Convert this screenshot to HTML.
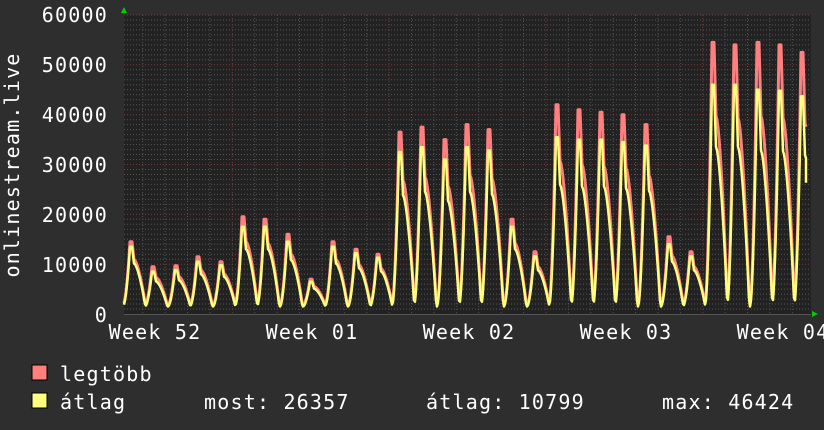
<!DOCTYPE html>
<html><head><meta charset="utf-8"><style>
html,body{margin:0;padding:0;background:#2e2e2e;}
body{width:824px;height:430px;overflow:hidden;position:relative;font-family:"DejaVu Sans Mono","Liberation Mono",monospace;color:#fff;}
svg{position:absolute;left:0;top:0;}
text{letter-spacing:1.2px;}
</style></head><body>
<svg id="g" width="824" height="430" xmlns="http://www.w3.org/2000/svg" font-family="DejaVu Sans Mono, Liberation Mono, monospace" fill="#fff">
<rect x="124" y="15" width="687" height="300" fill="#222"/>
<g id="grid"></g>
<g id="data"></g>
<polygon points="121,13 127,13 124,7" fill="#0c0"/>
<polygon points="812,311 812,317 818,314" fill="#0c0"/>
<g font-size="20" text-anchor="end">
<text x="108" y="22">60000</text>
<text x="108" y="72">50000</text>
<text x="108" y="122">40000</text>
<text x="108" y="172">30000</text>
<text x="108" y="222">20000</text>
<text x="108" y="272">10000</text>
<text x="108" y="322">0</text>
</g>
<text transform="translate(19,165) rotate(-90)" font-size="20" text-anchor="middle">onlinestream.live</text>
<g font-size="20" text-anchor="middle">
<text x="155" y="339">Week 52</text>
<text x="312" y="339">Week 01</text>
<text x="469" y="339">Week 02</text>
<text x="626" y="339">Week 03</text>
<text x="783" y="339">Week 04</text>
</g>
<rect x="32" y="365" width="15" height="15" fill="#ff7f7f" stroke="#000"/>
<rect x="32" y="393" width="15" height="15" fill="#ffff7f" stroke="#000"/>
<g font-size="20">
<text x="60" y="381">legtöbb</text>
<text x="60" y="409">átlag</text>
<text x="204" y="409">most: 26357</text>
<text x="426" y="409">átlag: 10799</text>
<text x="662" y="409">max: 46424</text>
</g>
</svg>
<script>
var grid=document.getElementById('grid'),data=document.getElementById('data');
function Y(v){return 314-v*299/60000;}
var s='';
for(var v=1000;v<=60000;v+=1000){var y=Y(v).toFixed(1);var maj=v%10000==0;
s+='<line x1="124" x2="811" y1="'+y+'" y2="'+y+'" stroke="'+(maj?'#7a3b3b':'#555')+'" stroke-dasharray="1,2"/>';}
for(var x=142.7;x<811;x+=22.4){var maj=Math.abs(((x-233)/156.8)-Math.round((x-233)/156.8))<0.02;
s+='<line y1="15" y2="314" x1="'+x.toFixed(1)+'" x2="'+x.toFixed(1)+'" stroke="'+(maj?'#7a3b3b':'#555')+'" stroke-dasharray="1,2"/>';}
s+='<line x1="124" x2="811" y1="314.5" y2="314.5" stroke="#555"/>';
grid.innerHTML=s;
var px=[130,152,175,197,220,242,264,287,310,332,355,377,399,421,444,466,488,511,534,556,578,600,622,645,668,690,712,734,757,779,801];
var pk=[14500,9500,9700,11500,10500,19500,19000,16000,7000,14500,13000,12000,36500,37500,35000,38000,37000,19000,12500,42000,41000,40500,40000,38000,15500,12500,54500,54000,54500,54000,52500];
var av=[13500,8500,8800,10500,9800,17500,17500,14500,6500,13500,12200,11300,32500,33500,31000,33500,32800,17500,11600,35500,35000,35000,34500,33800,14000,11600,46000,46000,45000,44800,43700];
function g(d){
 if(d<-7||d>15.4)return 0;
 if(d<0){var t=(d+7)/7;return Math.pow(t,1.8);}
 if(d<2)return 1;
 if(d<4)return 1-0.28*(d-2)/2;
 var t=(d-4)/11.4;return 0.72*(1-Math.pow(t,1.6));
}
function f(x,arr,mn){var best=0;for(var i=0;i<px.length;i++){var v=(arr[i]-mn)*g(x-px[i]);if(v>best)best=v;}return mn+best;}
var r='',yy='';
for(var x=124;x<=806;x+=1){r+=(x==124?'M':'L')+x+','+Y(f(x,pk,1800)).toFixed(1);yy+=(x==124?'M':'L')+x+','+Y(f(x,av,1500)).toFixed(1);}
yy+='L806,'+Y(26357).toFixed(1);
data.innerHTML='<path d="'+r+'" fill="none" stroke="#ff7f7f" stroke-width="3" stroke-linejoin="round"/><path d="'+yy+'" fill="none" stroke="#ffff7f" stroke-width="2.5" stroke-linejoin="round"/>';
</script>
</body></html>
